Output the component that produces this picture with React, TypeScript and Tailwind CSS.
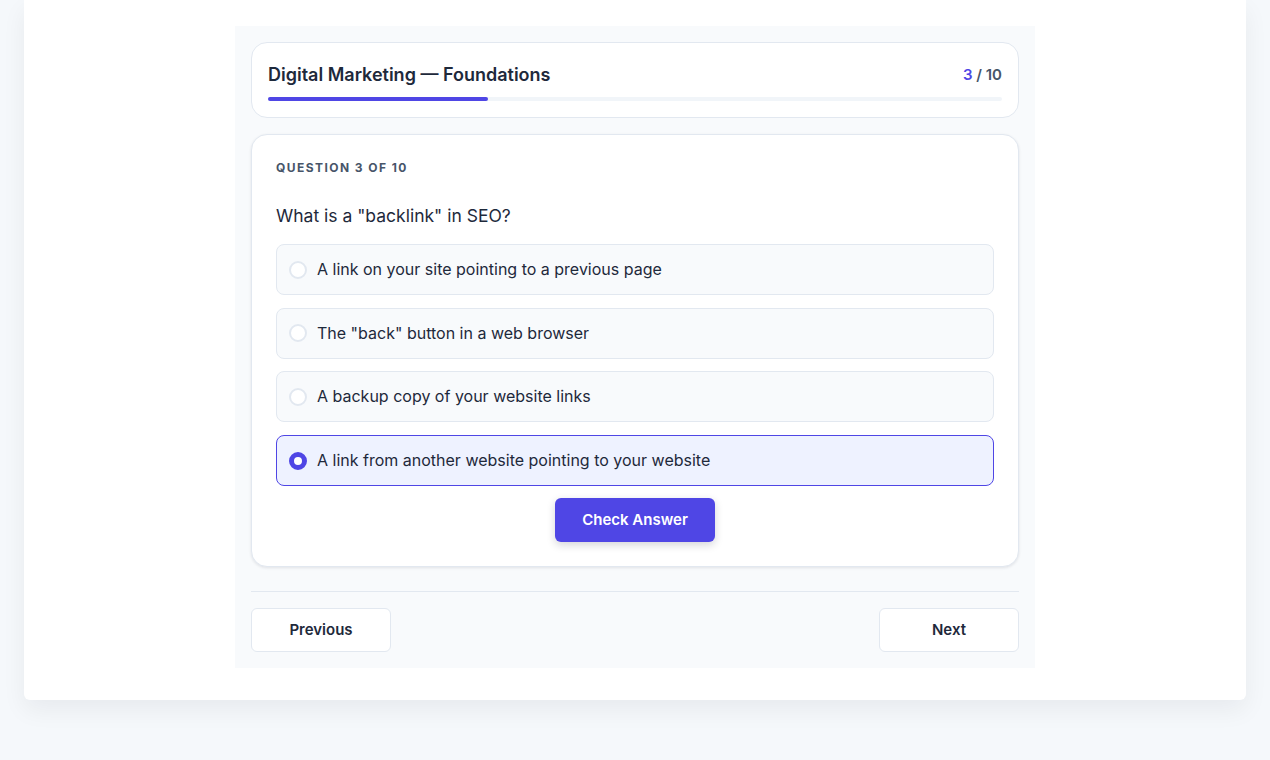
import { useState } from 'react'

const options = [
  'A link on your site pointing to a previous page',
  'The "back" button in a web browser',
  'A backup copy of your website links',
  'A link from another website pointing to your website',
]

export default function App() {
  const [selected, setSelected] = useState(3)

  return (
    <div
      className="min-h-[760px] bg-[#f5f8fb] px-6"
      style={{ fontFamily: 'Inter, "Liberation Sans", sans-serif' }}
    >
      <div className="rounded-b-md bg-white pt-[26px] pb-8 shadow-[0_10px_24px_rgba(15,23,42,0.06)]">
        <div className="mx-auto w-[800px] bg-[#f8fafc] p-4">
          {/* header */}
          <div className="rounded-2xl border border-[#e2e8f0] bg-white px-4 pt-[18px] pb-4">
            <div className="flex items-center justify-between">
              <h1 className="text-[18px] leading-7 font-semibold text-[#1e293b]">
                Digital Marketing — Foundations
              </h1>
              <div className="text-[15px] font-semibold text-[#475569]">
                <span className="text-[#4f46e5]">3</span> / 10
              </div>
            </div>
            <div className="mt-2 h-1 rounded-full bg-[#f1f5f9]">
              <div className="h-1 w-[30%] rounded-full bg-[#4f46e5]" />
            </div>
          </div>

          {/* question card */}
          <div className="mt-4 rounded-2xl border border-[#e2e8f0] bg-white px-6 pt-[25px] pb-6 shadow-[0_1px_3px_rgba(15,23,42,0.1)]">
            <div className="text-[12px] leading-4 font-bold tracking-[0.12em] text-[#475569]">
              QUESTION 3 OF 10
            </div>
            <p className="mt-[26px] text-[17.5px] leading-7 text-[#1e293b]">What is a "backlink" in SEO?</p>
            <div className="mt-[14px] flex flex-col gap-[12.7px]">
              {options.map((o, i) => {
                const active = i === selected
                return (
                  <button
                    key={o}
                    type="button"
                    onClick={() => setSelected(i)}
                    className={
                      active
                        ? 'flex items-center gap-[10px] rounded-lg border border-[#4f46e5] bg-[#eef2ff] px-3 py-3 text-left text-[16px] leading-[25px] text-[#1e293b]'
                        : 'flex items-center gap-[10px] rounded-lg border border-[#e2e8f0] bg-[#f8fafc] px-3 py-3 text-left text-[16px] leading-[25px] text-[#1e293b]'
                    }
                  >
                    <span
                      className={
                        active
                          ? 'h-[18px] w-[18px] shrink-0 rounded-full border-[5px] border-[#4f46e5] bg-white'
                          : 'h-[18px] w-[18px] shrink-0 rounded-full border-2 border-[#e2e8f0] bg-white'
                      }
                    />
                    {o}
                  </button>
                )
              })}
            </div>
            <div className="mt-3 flex justify-center">
              <button
                type="button"
                className="h-11 w-40 rounded-md bg-[#4f46e5] text-[15px] font-semibold text-white shadow-[0_3px_8px_rgba(15,23,42,0.18)]"
              >
                Check Answer
              </button>
            </div>
          </div>

          {/* nav */}
          <div className="mt-6 flex items-center justify-between border-t border-[#e2e8f0] pt-4">
            <button
              type="button"
              className="h-11 w-[140px] rounded-md border border-[#e2e8f0] bg-white text-[15px] font-semibold text-[#1e293b]"
            >
              Previous
            </button>
            <button
              type="button"
              className="h-11 w-[140px] rounded-md border border-[#e2e8f0] bg-white text-[15px] font-semibold text-[#1e293b]"
            >
              Next
            </button>
          </div>
        </div>
      </div>
    </div>
  )
}
